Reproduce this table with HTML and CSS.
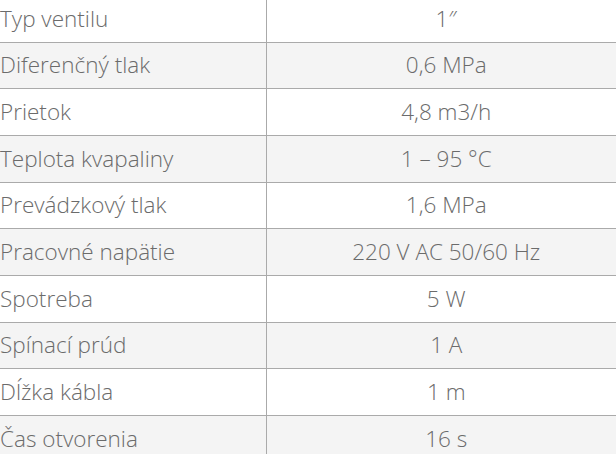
FILE: index.html
```html
<!DOCTYPE html>
<html>
<head>
<meta charset="utf-8">
<link rel="stylesheet" href="styles.css">
</head>
<body>
<table class="specs">
<tbody>
<tr><td class="label">Typ ventilu</td><td class="value">1″</td></tr>
<tr class="alt"><td class="label">Diferenčný tlak</td><td class="value">0,6 MPa</td></tr>
<tr><td class="label">Prietok</td><td class="value">4,8 m3/h</td></tr>
<tr class="alt"><td class="label">Teplota kvapaliny</td><td class="value">1 – 95 °C</td></tr>
<tr><td class="label">Prevádzkový tlak</td><td class="value">1,6 MPa</td></tr>
<tr class="alt"><td class="label">Pracovné napätie</td><td class="value">220 V AC 50/60 Hz</td></tr>
<tr><td class="label">Spotreba</td><td class="value">5 W</td></tr>
<tr class="alt"><td class="label">Spínací prúd</td><td class="value">1 A</td></tr>
<tr><td class="label">Dĺžka kábla</td><td class="value">1 m</td></tr>
<tr class="alt"><td class="label">Čas otvorenia</td><td class="value">16 s</td></tr>
</tbody>
</table>
</body>
</html>
```
FILE: styles.css
```css
html, body {
  margin: 0;
  padding: 0;
  background: #fff;
  overflow: hidden;
}
body {
  width: 616px;
  height: 454px;
  font-family: "Open Sans", "Liberation Sans", sans-serif;
  font-weight: 300;
  color: #6b6b6b;
}
.specs {
  border-collapse: collapse;
  margin-top: -5px;
  margin-left: -1px;
  width: 627px;
  table-layout: fixed;
}
.specs td {
  height: 46.67px;
  box-sizing: border-box;
  border-top: 1.5px solid #aaa;
  font-size: 22.5px;
  line-height: 26px;
  padding: 0;
  vertical-align: middle;
}
.specs .label {
  width: 267px;
  padding-left: 1px;
  border-right: 1.5px solid #aaa;
}
.specs .value {
  text-align: center;
}
.specs tr.alt td {
  background: #f4f4f4;
}
```
